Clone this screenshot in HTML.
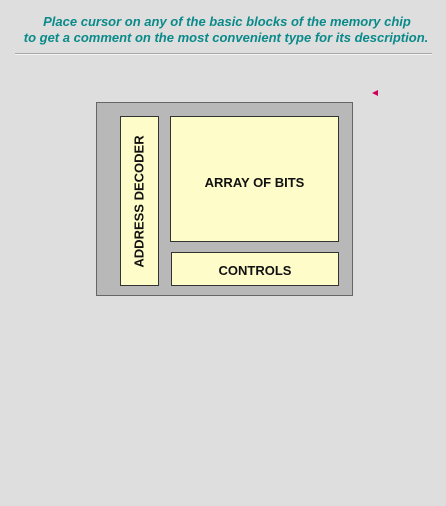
<!DOCTYPE html>
<html><head><style>
body{margin:0;width:446px;height:506px;background:#dedede;font-family:"Liberation Sans",Arial,sans-serif;position:relative;overflow:hidden}
.t{position:absolute;left:0;width:446px;text-align:center;color:#0a8a8a;font-weight:bold;font-style:italic;font-size:13px;white-space:nowrap}
.b{position:absolute;box-sizing:border-box;border:1px solid #333;background:#fefcc8;font-weight:bold;font-size:13px;color:#111;display:flex;align-items:center;justify-content:center}
</style></head><body>
<div class="t" style="top:14px;left:4px">Place cursor on any of the basic blocks of the memory chip</div>
<div class="t" style="top:30px;left:3px">to get a comment on the most convenient type for its description.</div>
<div style="position:absolute;left:15px;top:53px;width:417px;height:1px;background:#a8a8a8;border-bottom:1px solid #f4f4f4"></div>
<svg style="position:absolute;left:372px;top:90px" width="8" height="7"><polygon points="6,0 6,6 0,3" fill="#d0005a"/></svg>
<div style="position:absolute;left:96px;top:102px;width:257px;height:194px;box-sizing:border-box;border:1px solid #666;background:#b8b8b8"></div>
<div class="b" style="left:120px;top:116px;width:39px;height:170px"><span style="transform:rotate(-90deg);white-space:nowrap;display:block">ADDRESS DECODER</span></div>
<div class="b" style="left:170px;top:116px;width:169px;height:126px;padding-top:7px">ARRAY OF BITS</div>
<div class="b" style="left:171px;top:252px;width:168px;height:34px;padding-top:2px">CONTROLS</div>
</body></html>
